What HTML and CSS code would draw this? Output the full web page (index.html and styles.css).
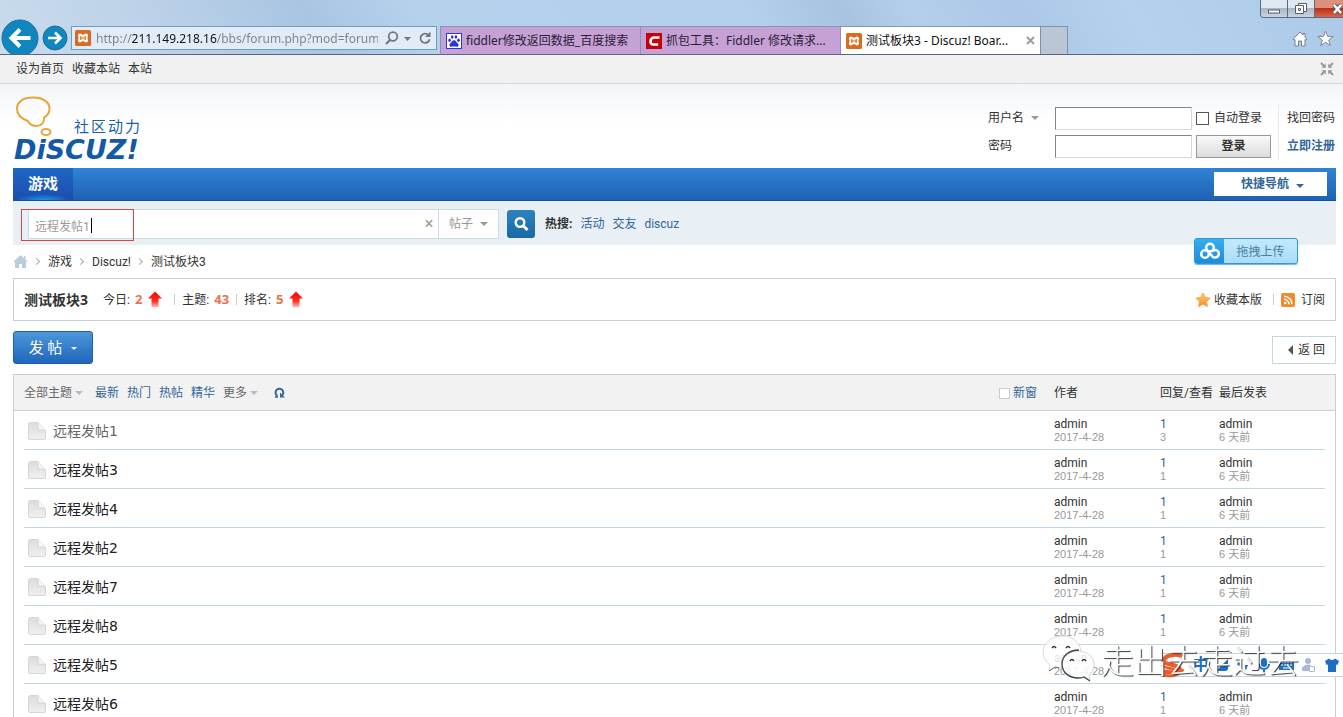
FILE: index.html
```html
<!DOCTYPE html>
<html lang="zh-CN">
<head>
<meta charset="utf-8">
<title>测试板块3 - Discuz! Board</title>
<link rel="stylesheet" href="styles.css">
</head>
<body>
<svg class="defs" width="0" height="0" aria-hidden="true">
  <defs>
    <linearGradient id="arrow-red" x1="0" y1="0" x2="0" y2="1"><stop offset="0" stop-color="#f00c00"/><stop offset=".6" stop-color="#ff2a1a"/><stop offset="1" stop-color="#ffb8ae"/></linearGradient>
    <linearGradient id="gold" x1="0" y1="0" x2="0" y2="1"><stop offset="0" stop-color="#ffd45e"/><stop offset="1" stop-color="#f78a3b"/></linearGradient>
    <linearGradient id="paper" x1="0" y1="0" x2="0" y2="1"><stop offset="0" stop-color="#dcdcdc"/><stop offset="1" stop-color="#f0f0f0"/></linearGradient>
    <symbol id="xicon" viewBox="0 0 16 16"><rect width="16" height="16" rx="1.5" fill="#dd6b1f"/><path d="M5 3.600c1.400 0 2 1.300 3 1.300s1.600-1.300 3-1.300c1.200 0 2 .9 2 2 0 1-.6 1.700-.6 2.400s.6 1.400.6 2.400c0 1.100-.8 2-2 2-1.400 0-2-1.300-3-1.300s-1.600 1.300-3 1.300c-1.200 0-2-.9-2-2 0-1 .6-1.700.6-2.400S3 6.600 3 5.600c0-1.100.8-2 2-2z" fill="#fff"/><path d="M5.800 6v4M10.200 6v4M5.800 8h4.400" stroke="#dd6b1f" stroke-width="1.200"/></symbol>
    <symbol id="up" viewBox="0 0 16 17"><path d="M8 .5 15 7.500h-3.500V16h-7V7.500H1z" fill="url(#arrow-red)"/></symbol>
    <symbol id="doc" viewBox="0 0 18 18"><path d="M2.500.5H10v8h7.500V16q0 1.500-1.500 1.500H2Q.5 17.500.5 16V2.500Q.5.5 2.500.5z" fill="url(#paper)" stroke="#d6d6d6"/><path d="M10.500 1 17 8h-6.500z" fill="#f6f6f6" stroke="#dedede" stroke-width=".8"/></symbol>
  </defs>
</svg>

<header class="chrome">
  <button class="back" aria-label="后退"><svg width="38" height="38" viewBox="0 0 38 38"><circle cx="19" cy="19" r="18" fill="#0e86be" stroke="#256c96"/><path d="M29.500 19H11M19 10.500 10.500 19l8.500 8.500" fill="none" stroke="#fff" stroke-width="4"/></svg></button>
  <button class="forward" aria-label="前进"><svg width="26" height="26" viewBox="0 0 26 26"><circle cx="13" cy="13" r="12" fill="#0e86be" stroke="#256c96"/><path d="M6 13h12M13 7.500l5.500 5.500-5.500 5.500" fill="none" stroke="#fff" stroke-width="2.600"/></svg></button>
  <div class="address">
    <svg width="16" height="16"><use href="#xicon"/></svg>
    <input type="text" aria-label="地址" value="http://211.149.218.16/bbs/forum.php?mod=forumdisplay">
    <svg width="50" height="16" viewBox="0 0 50 16" fill="none" stroke="#707880"><circle cx="10" cy="6.500" r="4.300" stroke-width="1.800"/><path d="M7 10 3 14" stroke-width="2.200"/><path d="M21 7h7l-3.500 4z" fill="#707880" stroke="none"/><path d="M45.500 5.200a4.600 4.600 0 1 0 1.100 4" stroke-width="1.800"/><path d="M47.500 1.500v5.500H42z" fill="#707880" stroke="none"/></svg>
  </div>
  <nav class="tabs" aria-label="标签页">
    <a href="#" class="tab"><svg width="16" height="16" viewBox="0 0 16 16"><rect x=".5" y=".5" width="15" height="15" fill="#fff" stroke="#2b35d8"/><g fill="#2b35d8"><ellipse cx="3.600" cy="7.200" rx="1.300" ry="1.700"/><ellipse cx="6.200" cy="4" rx="1.300" ry="1.700"/><ellipse cx="9.900" cy="4" rx="1.300" ry="1.700"/><ellipse cx="12.500" cy="7.200" rx="1.300" ry="1.700"/><path d="M8 7.200c2 0 2.300 2 3.700 3.100 1.600 1.400.7 3.800-1.200 3.500-1.700-.3-3.300-.3-5 0-1.900.3-2.800-2.100-1.200-3.500C5.700 9.200 6 7.200 8 7.200z"/></g></svg><span>fiddler修改返回数据_百度搜索</span></a>
    <a href="#" class="tab"><svg width="16" height="16" viewBox="0 0 16 16"><rect width="16" height="16" fill="#c8000a"/><path d="M13.500 4.500H8.300C4 4.500 3 11.500 7 11.500h5.200" fill="none" stroke="#fff" stroke-width="2.600"/></svg><span>抓包工具：Fiddler 修改请求...</span></a>
    <a href="#" class="tab active"><svg width="16" height="16"><use href="#xicon"/></svg><span>测试板块3 - Discuz! Boar...</span><svg class="close" width="9" height="9" viewBox="0 0 9 9"><path d="M1 1l7 7M8 1 1 8" stroke="#9a9a9a" stroke-width="1.800"/></svg></a>
    <button class="new-tab" aria-label="新建标签页"></button>
  </nav>
  <div class="chrome-end">
    <div class="window-buttons">
      <button aria-label="最小化"><svg width="14" height="16" viewBox="0 0 14 16"><rect x="1.500" y="9" width="11" height="3" fill="#fff" stroke="#545d6b"/></svg></button>
      <button aria-label="还原"><svg width="14" height="16" viewBox="0 0 14 16" fill="#fff" stroke="#545d6b"><path d="M4.500 2.500h8v8h-8z"/><path d="M1.500 4.500h8v8h-8z"/><path d="M4.500 7.500h2v2h-2z"/></svg></button>
      <button class="shut" aria-label="关闭"><svg width="14" height="16" viewBox="0 0 14 16"><path d="M5 4l7 8M12 4l-7 8" stroke="#545d6b" stroke-width="4.500"/><path d="M5 4l7 8M12 4l-7 8" stroke="#fff" stroke-width="2.500"/></svg></button>
    </div>
    <div class="chrome-tools">
      <button aria-label="主页"><svg width="16" height="16" viewBox="0 0 16 16"><path d="M8 1 1 8.200l1.200 1L3 8.500V15h3.500v-5h3v5H13V8.500l.8.7 1.200-1-2-2V2.500h-2v1.600z" fill="#fff" stroke="#6f8090"/></svg></button>
      <button aria-label="收藏夹"><svg width="17" height="17" viewBox="0 0 17 17"><path d="M8.500 1l2 5.300 5.700.2-4.500 3.500 1.600 5.500-4.800-3.200-4.800 3.200L5.300 10 .8 6.500l5.700-.2z" fill="#fff" stroke="#7b8793"/></svg></button>
    </div>
  </div>
</header>

<div class="toolbar">
  <a href="#">设为首页</a><a href="#">收藏本站</a><a href="#">本站</a>
  <button aria-label="切换到窄版"><svg width="14" height="14" viewBox="0 0 14 14"><path d="M1 1l4 4M13 1 9 5M1 13l4-4M13 13 9 9" stroke="#999" stroke-width="2"/><path d="M5.800 1.500v4.300H1.500zM8.200 1.500v4.300h4.300zM5.800 12.500V8.200H1.500zM8.200 12.500V8.200h4.300z" fill="#999"/></svg></button>
</div>

<div class="masthead">
  <a href="#" class="logo" aria-label="Discuz! 社区动力">
    <svg width="140" height="68" viewBox="0 0 140 68">
      <path d="M14 26C8 24 3 21 3 13.500 3 7 9 2.500 19 2.500S35.500 7 35.500 13.500c0 5-2.500 7.500-5.500 9 .5 5-2.500 8.500-7.500 8.500-4 0-7-2-8.500-5z" fill="none" stroke="#e8a53c" stroke-width="2"/>
      <ellipse cx="32" cy="37" rx="4.500" ry="3" fill="none" stroke="#e8a53c" stroke-width="2"/>
      <text class="logo-sub" x="60" y="37">社区动力</text>
      <text class="logo-word" x="0" y="64">DiSCUZ!</text>
    </svg>
  </a>
  <form class="login">
    <label for="user">用户名 <i class="caret"></i></label>
    <input id="user" type="text">
    <label class="auto"><input type="checkbox">自动登录</label>
    <a href="#">找回密码</a>
    <label for="pass">密码</label>
    <input id="pass" type="password">
    <button type="button">登录</button>
    <a href="#" class="register">立即注册</a>
  </form>
</div>

<main class="page">
  <nav class="nav">
    <a href="#">游戏</a>
    <button>快捷导航 <i class="caret blue"></i></button>
  </nav>
  <form class="search">
    <div class="search-box">
      <input type="text" aria-label="搜索" value="远程发帖1">
      <button type="button" class="clear" aria-label="清除">×</button>
      <button type="button" class="kind">帖子 <i class="caret"></i></button>
    </div>
    <button type="button" class="go" aria-label="搜索"><svg width="16" height="16" viewBox="0 0 16 16" fill="none" stroke="#fff"><circle cx="7" cy="6.500" r="4.300" stroke-width="2.400"/><path d="M10.300 9.800 14.500 14" stroke-width="3"/></svg></button>
    <strong>热搜:</strong><a href="#">活动</a><a href="#">交友</a><a href="#">discuz</a>
    <span class="cursor"></span>
    <span class="mark"></span>
    <a href="#" class="upload"><span class="upload-icon"><svg width="22" height="18" viewBox="0 0 22 18" fill="none" stroke="#fff" stroke-width="2.500"><circle cx="11" cy="5.500" r="3.800"/><circle cx="6" cy="12" r="3.800"/><path d="M9.500 9.500 13 14A3.800 3.800 0 1 0 12.800 9.800"/></svg></span><span class="upload-text">拖拽上传</span></a>
  </form>
  <nav class="crumbs" aria-label="位置">
    <a href="#" aria-label="首页"><svg width="15" height="13" viewBox="0 0 15 13"><path d="M7.500 0 0 7h2v6h4V9h3v4h4V7h2l-2.500-2.400V1H11v2.200z" fill="#b9cedd"/></svg></a>
    <i class="sep"></i><a href="#">游戏</a><i class="sep"></i><a href="#">Discuz!</a><i class="sep"></i><a href="#">测试板块3</a>
  </nav>
  <section class="forum">
    <h1>测试板块3</h1>
    <span class="stat">今日: <b>2</b></span><svg class="up" width="16" height="17"><use href="#up"/></svg>
    <i class="bar"></i><span class="stat">主题: <b>43</b></span>
    <i class="bar"></i><span class="stat">排名: <b>5</b></span><svg class="up" width="16" height="17"><use href="#up"/></svg>
    <div class="forum-links">
      <a href="#"><svg width="16" height="16" viewBox="0 0 16 16"><path d="M8 1l2.200 4.500 4.900.7-3.500 3.500.8 4.900L8 12.300l-4.400 2.300.8-4.900L.9 6.200l4.900-.7z" fill="url(#gold)" stroke="#f5a94a" stroke-linejoin="round"/></svg>收藏本版</a>
      <i class="bar"></i>
      <a href="#" class="feed"><svg width="14" height="14" viewBox="0 0 14 14"><rect width="14" height="14" rx="2" fill="#f28a2d"/><circle cx="4.200" cy="10" r="1.300" fill="#fff"/><path d="M3 6.200a5 5 0 0 1 5 5M3 3.200a8 8 0 0 1 8 8" fill="none" stroke="#fff" stroke-width="1.500"/></svg>订阅</a>
    </div>
  </section>
  <div class="actions">
    <button class="post">发 帖<i class="caret white"></i></button>
    <a href="#" class="return"><i class="left"></i>返 回</a>
  </div>
  <table class="threads">
    <thead>
      <tr>
        <th class="subject"><div class="filters">
          <a href="#" class="gray">全部主题 <i class="caret"></i></a>
          <a href="#">最新</a><a href="#">热门</a><a href="#">热帖</a><a href="#">精华</a>
          <a href="#" class="gray">更多 <i class="caret"></i></a>
          <button class="refresh" aria-label="刷新"><svg width="11" height="12" viewBox="0 0 11 12"><path d="M3.500 9A3.900 3.900 0 1 1 8.300 8.200" fill="none" stroke="#336699" stroke-width="2"/><path d="M6 5.500V10.500h5z" fill="#336699"/><path d="M1 10h3" stroke="#336699" stroke-width="1.600"/></svg></button>
          <label><input type="checkbox">新窗</label>
        </div></th>
        <th class="author">作者</th><th class="count">回复/查看</th><th class="last">最后发表</th>
      </tr>
    </thead>
    <tbody>
      <tr><td><a href="#" class="title visited"><svg width="18" height="18"><use href="#doc"/></svg>远程发帖1</a></td><td><a href="#">admin</a><em>2017-4-28</em></td><td><a href="#" class="replies">1</a><em>3</em></td><td><a href="#">admin</a><em>6 天前</em></td></tr>
      <tr><td><a href="#" class="title"><svg width="18" height="18"><use href="#doc"/></svg>远程发帖3</a></td><td><a href="#">admin</a><em>2017-4-28</em></td><td><a href="#" class="replies">1</a><em>1</em></td><td><a href="#">admin</a><em>6 天前</em></td></tr>
      <tr><td><a href="#" class="title"><svg width="18" height="18"><use href="#doc"/></svg>远程发帖4</a></td><td><a href="#">admin</a><em>2017-4-28</em></td><td><a href="#" class="replies">1</a><em>1</em></td><td><a href="#">admin</a><em>6 天前</em></td></tr>
      <tr><td><a href="#" class="title"><svg width="18" height="18"><use href="#doc"/></svg>远程发帖2</a></td><td><a href="#">admin</a><em>2017-4-28</em></td><td><a href="#" class="replies">1</a><em>1</em></td><td><a href="#">admin</a><em>6 天前</em></td></tr>
      <tr><td><a href="#" class="title"><svg width="18" height="18"><use href="#doc"/></svg>远程发帖7</a></td><td><a href="#">admin</a><em>2017-4-28</em></td><td><a href="#" class="replies">1</a><em>1</em></td><td><a href="#">admin</a><em>6 天前</em></td></tr>
      <tr><td><a href="#" class="title"><svg width="18" height="18"><use href="#doc"/></svg>远程发帖8</a></td><td><a href="#">admin</a><em>2017-4-28</em></td><td><a href="#" class="replies">1</a><em>1</em></td><td><a href="#">admin</a><em>6 天前</em></td></tr>
      <tr><td><a href="#" class="title"><svg width="18" height="18"><use href="#doc"/></svg>远程发帖5</a></td><td><a href="#">admin</a><em>2017-4-28</em></td><td><a href="#" class="replies">1</a><em>1</em></td><td><a href="#">admin</a><em>6 天前</em></td></tr>
      <tr><td><a href="#" class="title"><svg width="18" height="18"><use href="#doc"/></svg>远程发帖6</a></td><td><a href="#">admin</a><em>2017-4-28</em></td><td><a href="#" class="replies">1</a><em>1</em></td><td><a href="#">admin</a><em>6 天前</em></td></tr>
    </tbody>
  </table>
</main>

<div class="ime">
  <svg width="26" height="26" viewBox="0 0 28 28" fill="none"><path d="M24 4.500C17 1.500 6 3 4 9c-1.500 5 15 4 17 8.500 1.500 4-9 5.500-17 3.500" stroke="#ee5a2a" stroke-width="4.500"/><path d="M2 14c2 4 11 3 14 5M3 24.500c7 2.500 18 1.500 22-6" stroke="#ee5a2a" stroke-width="3"/></svg>
  <b>中</b>
  <svg width="14" height="14" viewBox="0 0 14 14"><path d="M13 1v9q0 3-3 3H1z" fill="#1c6fc4"/></svg>
  <svg width="14" height="14" viewBox="0 0 14 14" fill="#1c6fc4"><circle cx="3" cy="6" r="1.800"/><path d="M9 7h3l-2 5-1-1z"/></svg>
  <svg width="14" height="16" viewBox="0 0 14 16" fill="none" stroke="#1c6fc4" stroke-width="2"><rect x="4" y="1" width="6" height="9" rx="3" fill="#1c6fc4" stroke="none"/><path d="M2 7c0 6.500 10 6.500 10 0M7 12v3.500"/></svg>
  <svg width="17" height="14" viewBox="0 0 17 14"><path d="M1 2h15v10H1z" fill="#1c6fc4"/><path d="M3 4.500h11M3 7h11" stroke="#fff" stroke-width="1.200" stroke-dasharray="2 1"/><path d="M5 10h7" stroke="#fff"/></svg>
  <svg width="16" height="16" viewBox="0 0 16 16" fill="#aeb7d3"><circle cx="7" cy="4" r="3"/><path d="M1 14V11q1-3 6-3.500 2 0 3 1V14z"/><path d="M8.500 9.500h5v5h-5z" fill="#fff" stroke="#aeb7d3"/></svg>
  <svg width="16" height="16" viewBox="0 0 16 16"><path d="M5 1.500q3 3 6 0l4 2.500-1.500 4-1.500-.5V15H4V7.500L2.500 8 1 4z" fill="#1c6fc4"/></svg>
</div>
<div class="watermark">
  <svg width="59" height="50" viewBox="0 0 59 50"><path d="M24 2C13 2 4 9 4 18c0 5 3 10 7 13l-1 6 7-4c3 1 6 1 9 1 9-1 16-8 16-16S34 2 24 2z" fill="#fff" fill-opacity=".85" stroke="#d5d9dc"/><path d="M10 37l6-4 4 1" fill="none" stroke="#666"/><path d="M39 17c-9 0-16 6-16 14s7 13 16 13c2 0 4 0 6-1l6 3-1-5c3-2 5-6 5-10 0-8-7-14-16-14z" fill="#fff" fill-opacity=".85" stroke="#d0d4d8"/><path d="M40 16c-10 0-17 6-17 14 0 9 8 14 16 14 2 0 4 0 6-1l6 4" fill="none" stroke="#444" stroke-width="1.300"/><path d="M13 14q2-3 4 0M27 14q2-3 4 0M31 27q2-3 4 0M43 27q2-3 4 0" fill="none" stroke="#333" stroke-width="1.500"/></svg>
  <span>走出去走过去</span>
</div>
</body>
</html>
```
FILE: styles.css
```css
* { box-sizing: border-box; }
html { height: 100%; overflow: hidden; }
body {
  margin: 0;
  height: 100%;
  overflow: hidden;
  background: #fff;
  color: #333;
  font: 12px/16px Roboto, "Noto Sans CJK SC", sans-serif;
}
a { color: inherit; text-decoration: none; }
button, input { font: inherit; color: inherit; margin: 0; padding: 0; border: 0; background: none; border-radius: 0; outline: 0; }
svg { display: block; flex: none; }
.defs { position: absolute; }
i { font-style: normal; }

.caret {
  display: inline-block;
  margin-left: 4px;
  border: 4px solid transparent;
  border-top-color: #999;
  border-bottom: 0;
  vertical-align: 2px;
}
.caret.blue { border-top-color: #336699; vertical-align: 0; }
.caret.white { border-width: 3px; border-top-color: #fff; border-bottom: 0; margin-left: 9px; }

/* browser window */
.chrome {
  display: flex;
  align-items: flex-end;
  height: 55px;
  border-bottom: 1px solid #5b6480;
  background: linear-gradient(60deg, #c9dbee 0, #bdd2e8 12%, #a9c5e2 24%, #b6d1ec 32%, #b3d0ed 56%, #a8c3df 63%, #b2cfeb 68%, #abc9e7 76%, #b5d1ee 84%, #accae8 100%);
  font: 12px/16px "Noto Sans", "Noto Sans CJK SC", sans-serif;
}
.back { height: 35px; margin: 0 3px 0 1px; overflow: hidden; }
.forward { height: 26px; margin: 0 3px 3px 0; }
.address {
  display: flex;
  align-items: center;
  gap: 5px;
  width: 366px;
  height: 24px;
  margin-bottom: 4px;
  padding: 0 3px;
  border: 1px solid #6d9fc4;
  background: #e2ecf7;
}
.address input {
  flex: 1;
  min-width: 0;
  height: 20px;
  background: linear-gradient(90deg, #7b828b 36px, #111 36px, #111 121px, #7b828b 121px);
  -webkit-background-clip: text;
  background-clip: text;
  -webkit-text-fill-color: transparent;
}
.tabs { display: flex; height: 28px; margin-left: 3px; }
.tab {
  display: flex;
  align-items: center;
  gap: 4px;
  width: 200px;
  padding: 0 5px;
  border: 1px solid #8795b0;
  border-width: 1px 0 0 1px;
  background: #c5a1d6;
  color: #2b1d35;
  white-space: nowrap;
}
.tab span { flex: 1; min-width: 0; overflow: hidden; }
.tab.active { background: #fff; color: #111; }
.new-tab { width: 28px; border: 1px solid #7d93ac; border-bottom: 0; background: #bac6d3; }
.chrome-end { display: flex; flex-direction: column; justify-content: space-between; align-items: flex-end; height: 54px; margin-left: auto; }
.window-buttons { display: flex; height: 18px; border: 1px solid #5d6a7c; border-width: 0 0 1px 1px; border-radius: 0 0 0 4px; overflow: hidden; }
.window-buttons button { width: 27px; padding-left: 6px; border-right: 1px solid #5d6a7c; background: linear-gradient(#dfe8f1 50%, #a9b7c8 50%, #c8d5e3); }
.window-buttons .shut { width: 28px; padding-left: 14px; border: 0; background: linear-gradient(#dd8f7c 45%, #bf2e14 50%, #d8654a); }
.chrome-tools { display: flex; gap: 9px; padding: 0 9px 7px 0; }

/* site toolbar */
.toolbar {
  display: flex;
  align-items: center;
  gap: 8px;
  height: 29px;
  padding: 0 9px 0 16px;
  border-bottom: 1px solid #cfd6dc;
  background: #f1f1f1;
}
.toolbar button { margin-left: auto; }

.masthead {
  display: flex;
  justify-content: space-between;
  height: 84px;
  padding: 11px 8px 0 14px;
  background: linear-gradient(#f3f5f8, #fff 40px);
}
.logo-sub { font: 15px "Noto Sans CJK SC", sans-serif; fill: #1e5fa8; letter-spacing: 2px; }
.logo-word { font: italic bold 27px "DejaVu Sans", sans-serif; fill: #1459a8; }
.login {
  display: grid;
  grid-template-columns: 63px 137px 75px auto;
  grid-auto-rows: 24px;
  gap: 4px;
  align-items: center;
  align-self: start;
  padding-top: 11px;
}
.login > input { height: 23px; border: 1px solid #848484; border-color: #848484 #d8d8d8 #d8d8d8 #848484; background: #fff; }
.login > a { padding-left: 8px; border-left: 1px solid #e6e9ec; margin-left: 3px; line-height: 28px; }
.login .register { color: #336699; font-weight: bold; }
.auto { display: flex; align-items: center; gap: 5px; white-space: nowrap; }
.auto input, .filters input { appearance: none; width: 13px; height: 13px; border: 1px solid #555; background: #fff; }
.login button { height: 23px; border: 1px solid #999; background: linear-gradient(#fafafa, #dcdcdc); font-weight: bold; }

.page { margin: 0 7px 0 13px; }
.nav {
  display: flex;
  align-items: center;
  justify-content: space-between;
  height: 33px;
  padding-right: 9px;
  border-bottom: 1px solid #1c5090;
  background: linear-gradient(#2f83d6, #1e62b4);
}
.nav a { padding: 0 15px; background: radial-gradient(ellipse 28px 6px at 50% 100%, #1798ec, transparent), linear-gradient(#1c68c4, #1c4cae); color: #fff; font-size: 15px; line-height: 32px; font-weight: bold; }
.nav button { width: 113px; height: 24px; padding-left: 4px; background: #fff; color: #336699; font-weight: bold; }

.search {
  position: relative;
  display: flex;
  align-items: center;
  height: 44px;
  padding: 1px 0 0 15px;
  background: #e8eff5;
}
.search-box { display: flex; width: 471px; height: 30px; border: 1px solid #cddbe3; background: #fff; }
.search-box input { flex: 1; min-width: 0; padding: 6px 0 0 6px; color: #999; }
.clear { width: 18px; color: #999; font-size: 16px; }
.kind { width: 60px; border-left: 1px solid #cddbe3; color: #999; }
.go { display: grid; place-items: center; width: 28px; height: 28px; margin: 0 10px 0 8px; border-radius: 3px; background: linear-gradient(#2c83c0, #1a68a6); }
.search strong { color: #333; }
.search > a { margin-left: 8px; color: #336699; }
.mark { position: absolute; left: 8px; top: 8px; width: 113px; height: 32px; border: 1px solid #d64545; }
.cursor { position: absolute; left: 78px; top: 17px; width: 1px; height: 15px; background: #000; }
.search .upload {
  position: absolute;
  right: 38px;
  top: 37px;
  display: flex;
  width: 104px;
  height: 26px;
  border: 1px solid #2e98d2;
  border-radius: 3px;
  background: linear-gradient(#c5e8fb, #a8dcfa);
  box-shadow: 0 1px 1px #7bb0cf;
  line-height: 26px;
}
.upload-icon { display: grid; place-items: center; width: 29px; background: linear-gradient(#38adf0, #1a8ed8); }
.upload-text { flex: 1; text-align: center; color: #4a7f9f; }

.crumbs { display: flex; align-items: center; gap: 7px; height: 33px; }
.sep { width: 5px; height: 5px; margin: 0 2px 0 -1px; border: 1px solid #aaa; border-width: 1px 1px 0 0; transform: rotate(45deg); }

.forum { display: flex; align-items: center; height: 43px; padding: 0 10px; border: 1px solid #cdcdcd; }
.forum h1 { margin: 0 15px 0 0; font: bold 14px/20px "Noto Sans", "Noto Sans CJK SC", sans-serif; }
.stat b { margin-left: 2px; font: bold 13px/16px "Noto Sans", sans-serif; color: #ee7050; }
.up { margin: 0 4px 0 5px; }
.bar { width: 1px; height: 11px; margin: 0 7px; background: #ccc; }
.forum-links { display: flex; align-items: center; margin-left: auto; }
.forum-links a { display: flex; align-items: center; gap: 3px; }
.forum-links .feed { gap: 6px; }
.forum-links .bar { margin: 0 7px 0 11px; }

.actions { display: flex; justify-content: space-between; align-items: flex-end; padding: 10px 0; }
.post { width: 80px; height: 33px; border: 1px solid #1d5ea8; border-radius: 3px; background: linear-gradient(#4c97dc, #1f66ba); color: #fff; font-size: 15px; }
.post .caret { vertical-align: 3px; }
.return { display: flex; align-items: center; height: 28px; padding: 0 10px 0 15px; border: 1px solid #c2d5e3; }
.left { margin-right: 5px; border: 5px solid transparent; border-right-color: #555; border-left: 0; }

.threads { width: 100%; table-layout: fixed; border: 1px solid #cdcdcd; border-bottom: 0; border-collapse: separate; border-spacing: 0; }
.threads th { height: 36px; padding: 1px 0 0; border-bottom: 1px solid #ccd0d3; background: #f2f2f2; text-align: left; font-weight: normal; white-space: nowrap; }
.author { width: 106px; }
.count { width: 59px; }
.last { width: 116px; }
.filters { display: flex; align-items: center; gap: 8px; padding: 0 17px 0 10px; color: #336699; }
.filters .gray { color: #666; }
.filters .gray:first-child { margin-right: 4px; }
.filters .caret { margin-left: 0; border-top-color: #bbb; }
.refresh { margin-left: 8px; }
.filters label { display: flex; align-items: center; gap: 3px; margin-left: auto; }
.filters input { width: 11px; height: 11px; border-color: #ccc; }
.threads td { height: 39px; padding: 1px 0 0; background: linear-gradient(#c2d5e3, #c2d5e3) 0 100% / 100% 1px no-repeat; }
.threads td:first-child { padding: 0; background-position: 10px 100%; }
.threads td:last-child { background-size: calc(100% - 10px) 1px; }
.threads td > a, .threads em { display: block; line-height: 13px; }
.threads em { color: #999; font: 11px/13px "Liberation Sans", "Noto Sans CJK SC", sans-serif; }
.threads .title { display: flex; align-items: center; gap: 7px; padding-left: 14px; color: #222; font: 14px/20px "DejaVu Sans", "Noto Sans CJK SC", sans-serif; }
.threads .visited { color: #666; }
.threads .replies { color: #336699; }

/* floating layers */
.ime {
  position: fixed;
  right: 0;
  bottom: 40px;
  display: flex;
  align-items: center;
  justify-content: space-between;
  width: 183px;
  height: 24px;
  padding-right: 3px;
  border: 1px solid #c2d5e3;
  border-width: 1px 0;
  background: #fff;
  color: #1c6fc4;
}
.ime b { font-size: 16px; }
.watermark { position: fixed; right: 44px; bottom: 33px; display: flex; align-items: center; gap: 3px; white-space: nowrap; }
.watermark span { color: #fff; font: 300 33px/48px "Noto Sans CJK SC", sans-serif; text-shadow: 1px 1px 1px #333; }
```
